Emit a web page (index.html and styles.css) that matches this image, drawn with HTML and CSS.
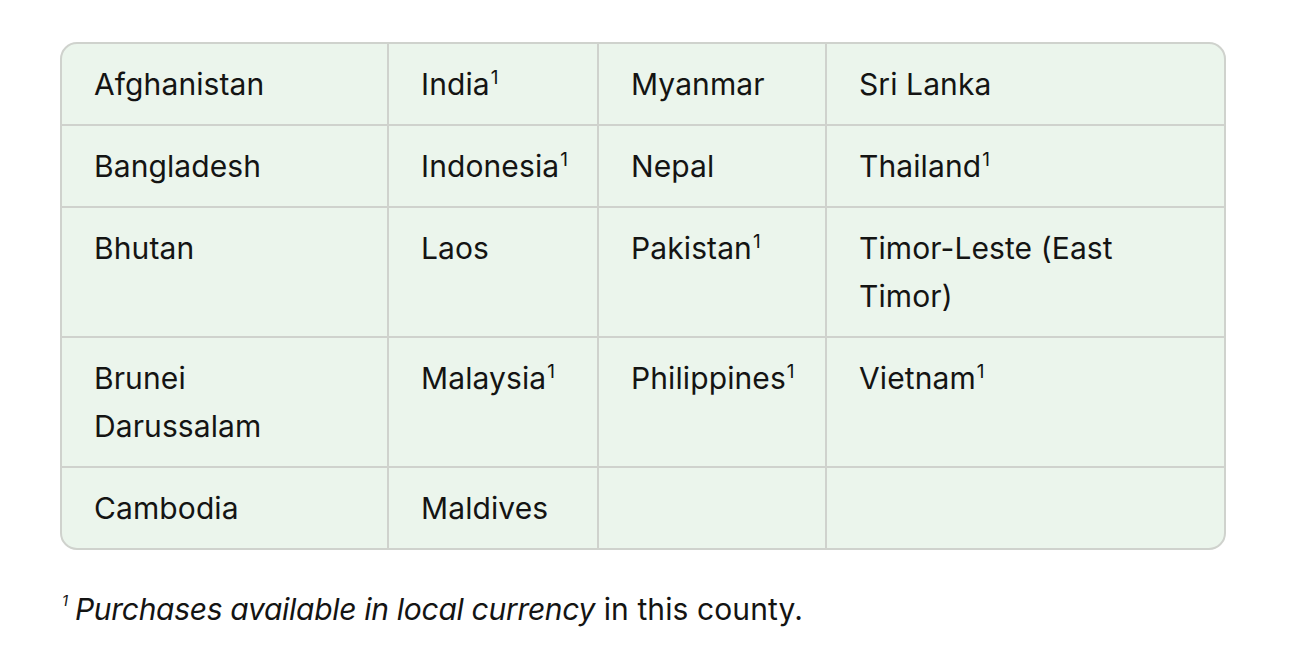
FILE: index.html
```html
<!DOCTYPE html>
<html lang="en">
<head>
<meta charset="utf-8">
<title>Countries</title>
<link rel="stylesheet" href="styles.css">
</head>
<body>
<main class="page">
  <div class="table">
    <div class="cell">Afghanistan</div>
    <div class="cell">India<sup class="fn">1</sup></div>
    <div class="cell">Myanmar</div>
    <div class="cell last">Sri Lanka</div>

    <div class="cell">Bangladesh</div>
    <div class="cell">Indonesia<sup class="fn">1</sup></div>
    <div class="cell">Nepal</div>
    <div class="cell last">Thailand<sup class="fn">1</sup></div>

    <div class="cell">Bhutan</div>
    <div class="cell">Laos</div>
    <div class="cell">Pakistan<sup class="fn">1</sup></div>
    <div class="cell last">Timor-Leste (East Timor)</div>

    <div class="cell">Brunei Darussalam</div>
    <div class="cell">Malaysia<sup class="fn">1</sup></div>
    <div class="cell">Philippines<sup class="fn">1</sup></div>
    <div class="cell last">Vietnam<sup class="fn">1</sup></div>

    <div class="cell bottom">Cambodia</div>
    <div class="cell bottom">Maldives</div>
    <div class="cell bottom"></div>
    <div class="cell bottom last"></div>
  </div>
  <p class="note"><em class="note-em"><sup class="fn-note">1</sup> Purchases available in local currency</em> in this county.</p>
</main>
</body>
</html>
```

FILE: styles.css
```css
html, body {
  margin: 0;
  padding: 0;
  background: #ffffff;
}

body {
  font-family: Inter, "Noto Sans", sans-serif;
  color: #141413;
  font-size: 30px;
  line-height: 48px;
  letter-spacing: 0.1px;
}

.page {
  padding: 42px 70px 0 60px;
}

.table {
  width: 1166px;
  box-sizing: border-box;
  display: grid;
  grid-template-columns: 327px 210px 228px 397px;
  border: 2px solid #cfd2cd;
  border-radius: 17px;
  overflow: hidden;
  background: #ebf5ec;
}

.cell {
  box-sizing: border-box;
  padding: 16px 30px 16px 32px;
  border-right: 2px solid #cfd2cd;
  border-bottom: 2px solid #cfd2cd;
  min-height: 82px;
}

.cell.last {
  border-right: none;
}

.cell.bottom {
  border-bottom: none;
  min-height: 80px;
}

.fn {
  font-size: 19px;
  line-height: 0;
  vertical-align: 11px;
  margin-left: 1px;
}

.note {
  margin: 35px 0 0 2px;
}

.note-em {
  font-style: italic;
  letter-spacing: -0.3px;
}

.fn-note {
  font-size: 15px;
  line-height: 0;
  vertical-align: 14px;
  margin-right: -1px;
}
```
